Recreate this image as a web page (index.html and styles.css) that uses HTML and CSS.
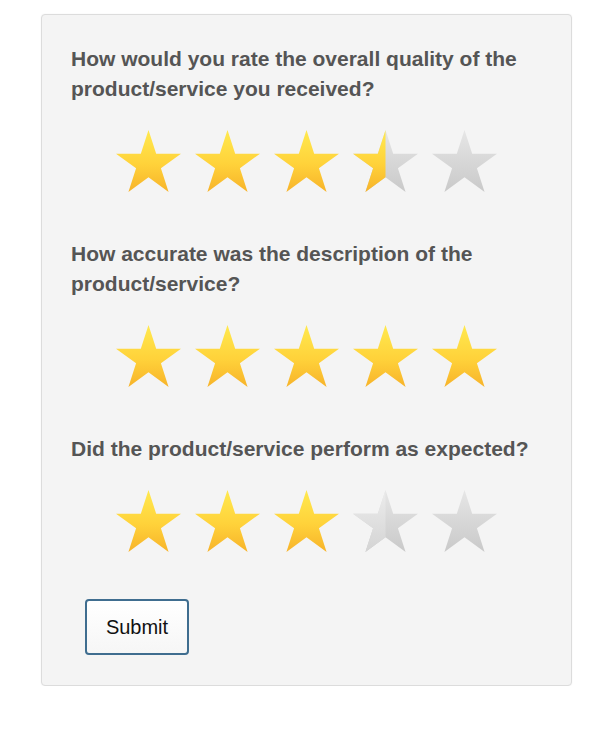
FILE: index.html
```html
<!DOCTYPE html>
<html>
<head>
<meta charset="utf-8">
<link rel="stylesheet" href="styles.css">
</head>
<body>
<svg width="0" height="0" class="defs">
  <defs>
    <linearGradient id="gold" x1="0" y1="0" x2="0" y2="1">
      <stop offset="0" stop-color="#ffe94f"/>
      <stop offset="0.55" stop-color="#ffd23a"/>
      <stop offset="1" stop-color="#f7b32a"/>
    </linearGradient>
    <linearGradient id="grey" x1="0" y1="0" x2="0" y2="1">
      <stop offset="0" stop-color="#e6e6e6"/>
      <stop offset="1" stop-color="#c9c9c9"/>
    </linearGradient>
    <linearGradient id="greyl" x1="0" y1="0" x2="0" y2="1">
      <stop offset="0" stop-color="#ececec"/>
      <stop offset="1" stop-color="#d4d4d4"/>
    </linearGradient>
    <clipPath id="lefthalf"><rect x="0" y="0" width="50" height="100"/></clipPath>
    <polygon id="star" points="50,0 61.23,34.55 97.55,34.55 68.17,55.9 79.39,90.45 50,69.1 20.61,90.45 31.83,55.9 2.45,34.55 38.77,34.55"/>
  </defs>
</svg>
<div class="card">
  <div class="question">
    <h3 class="q-title">How would you rate the overall quality of the product/service you received?</h3>
    <div class="stars">
      <svg class="star" viewBox="2.45 0 95.1 90.45"><use href="#star" fill="url(#gold)"/></svg>
      <svg class="star" viewBox="2.45 0 95.1 90.45"><use href="#star" fill="url(#gold)"/></svg>
      <svg class="star" viewBox="2.45 0 95.1 90.45"><use href="#star" fill="url(#gold)"/></svg>
      <svg class="star" viewBox="2.45 0 95.1 90.45"><use href="#star" fill="url(#grey)"/><use href="#star" fill="url(#gold)" clip-path="url(#lefthalf)"/></svg>
      <svg class="star" viewBox="2.45 0 95.1 90.45"><use href="#star" fill="url(#grey)"/></svg>
    </div>
  </div>
  <div class="question">
    <h3 class="q-title">How accurate was the description of the product/service?</h3>
    <div class="stars">
      <svg class="star" viewBox="2.45 0 95.1 90.45"><use href="#star" fill="url(#gold)"/></svg>
      <svg class="star" viewBox="2.45 0 95.1 90.45"><use href="#star" fill="url(#gold)"/></svg>
      <svg class="star" viewBox="2.45 0 95.1 90.45"><use href="#star" fill="url(#gold)"/></svg>
      <svg class="star" viewBox="2.45 0 95.1 90.45"><use href="#star" fill="url(#gold)"/></svg>
      <svg class="star" viewBox="2.45 0 95.1 90.45"><use href="#star" fill="url(#gold)"/></svg>
    </div>
  </div>
  <div class="question">
    <h3 class="q-title">Did the product/service perform as expected?</h3>
    <div class="stars">
      <svg class="star" viewBox="2.45 0 95.1 90.45"><use href="#star" fill="url(#gold)"/></svg>
      <svg class="star" viewBox="2.45 0 95.1 90.45"><use href="#star" fill="url(#gold)"/></svg>
      <svg class="star" viewBox="2.45 0 95.1 90.45"><use href="#star" fill="url(#gold)"/></svg>
      <svg class="star" viewBox="2.45 0 95.1 90.45"><use href="#star" fill="url(#grey)"/><use href="#star" fill="url(#greyl)" clip-path="url(#lefthalf)"/></svg>
      <svg class="star" viewBox="2.45 0 95.1 90.45"><use href="#star" fill="url(#grey)"/></svg>
    </div>
  </div>
  <button class="submit" type="button">Submit</button>
</div>
</body>
</html>
```

FILE: styles.css
```css
html, body {
  margin: 0;
  padding: 0;
  background: #ffffff;
}
body {
  font-family: "Liberation Sans", Arial, sans-serif;
}
.defs {
  position: absolute;
  width: 0;
  height: 0;
}
.card {
  box-sizing: border-box;
  margin: 14px 40px 0 41px;
  width: 531px;
  height: 672px;
  background: #f4f4f4;
  border: 1px solid #dcdcdc;
  border-radius: 4px;
  box-shadow: 0 0 2px rgba(0,0,0,0.06);
  padding: 29px 29px 0 29px;
}
.question {
  display: flex;
  flex-direction: column;
  margin-bottom: 47px;
}
.q-title {
  margin: 0;
  font-size: 21px;
  line-height: 30px;
  font-weight: bold;
  color: #555555;
}
.stars {
  display: flex;
  justify-content: center;
  gap: 14px;
  margin-top: 26px;
}
.star {
  width: 65px;
  height: 62px;
  display: block;
}
.submit {
  margin: 0 0 0 14px;
  width: 104px;
  height: 56px;
  border: 2px solid #3f6d8f;
  border-radius: 4px;
  background: linear-gradient(#ffffff, #f6f6f6);
  font-family: "Liberation Sans", Arial, sans-serif;
  font-size: 20px;
  color: #111111;
  padding: 0;
}
```
